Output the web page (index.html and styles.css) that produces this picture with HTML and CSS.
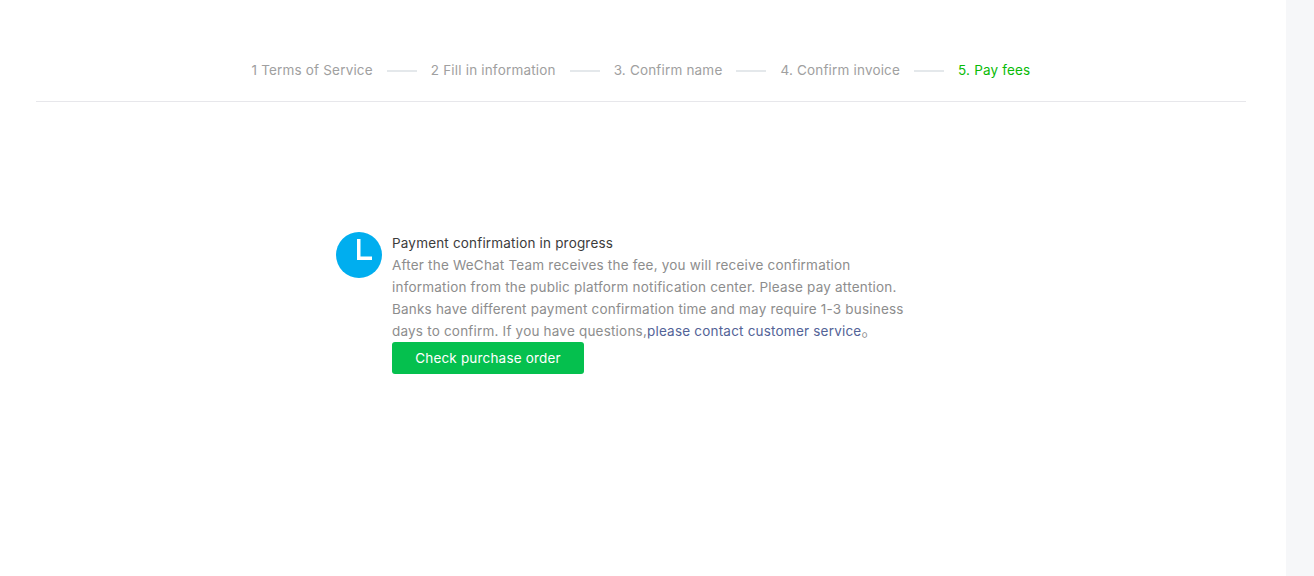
FILE: index.html
```html
<!DOCTYPE html>
<html lang="en">
<head>
<meta charset="utf-8">
<title>Pay fees</title>
<link rel="stylesheet" href="styles.css">
</head>
<body>
<div class="page">
  <main class="panel">
    <nav class="steps">
      <span class="step">1 Terms of Service</span>
      <i class="sep"></i>
      <span class="step">2 Fill in information</span>
      <i class="sep"></i>
      <span class="step">3. Confirm name</span>
      <i class="sep"></i>
      <span class="step">4. Confirm invoice</span>
      <i class="sep"></i>
      <span class="step step-active">5. Pay fees</span>
    </nav>
    <section class="status">
      <svg class="status-icon" width="46" height="46" viewBox="0 0 46 46" aria-hidden="true">
        <circle cx="23" cy="23" r="23" fill="#00aeef"/>
        <path d="M22.75 7V26.25H36" fill="none" stroke="#fff" stroke-width="3.5"/>
      </svg>
      <div class="status-body">
        <h1 class="status-title">Payment confirmation in progress</h1>
        <p class="status-text">After the WeChat Team receives the fee, you will receive confirmation<br>information from the public platform notification center. Please pay attention.<br>Banks have different payment confirmation time and may require 1-3 business<br>days to confirm. If you have questions,<a class="link" href="#">please contact customer service</a><span class="stop">。</span></p>
        <a class="button" href="#">Check purchase order</a>
      </div>
    </section>
  </main>
  <aside class="rail"></aside>
</div>
</body>
</html>
```

FILE: styles.css
```css
html, body {
  margin: 0;
  padding: 0;
  height: 100%;
  overflow: hidden;
  background: #fff;
}
body {
  font-family: Inter, "Noto Sans CJK SC", sans-serif;
  font-size: 13.5px;
  letter-spacing: 0.18px;
  color: #353535;
}
.page {
  display: flex;
  height: 576px;
}
.panel {
  flex: 1;
  padding: 0 40px 0 36px;
  min-width: 0;
}
.rail {
  width: 28px;
  background: #f6f7f9;
}
.steps {
  display: flex;
  justify-content: center;
  align-items: center;
  gap: 14px;
  box-sizing: border-box;
  height: 102px;
  padding: 59px 0 20px;
  border-bottom: 1px solid #e7e7eb;
}
.step {
  color: #a0a0a0;
  line-height: 22px;
  white-space: nowrap;
}
.step-active {
  color: #09bb07;
}
.sep {
  display: block;
  width: 30px;
  height: 2px;
  margin-top: 2px;
  background: #e4e8eb;
}
.status {
  display: flex;
  gap: 10px;
  margin: 130px 0 0 300px;
}
.status-icon {
  flex: none;
}
.status-title {
  margin: 0;
  font-size: inherit;
  font-weight: 400;
  line-height: 22px;
  color: #3c3c3c;
}
.status-text {
  margin: 0;
  line-height: 22px;
  color: #8d8d8d;
  letter-spacing: 0.2px;
  white-space: nowrap;
}
.link {
  color: #536397;
  text-decoration: none;
}
.stop {
  font-size: 16px;
  line-height: 1;
}
.button {
  display: block;
  width: 192px;
  height: 32px;
  border-radius: 3px;
  background: #05c04e;
  color: #fff;
  line-height: 32px;
  text-align: center;
  text-decoration: none;
}
```
